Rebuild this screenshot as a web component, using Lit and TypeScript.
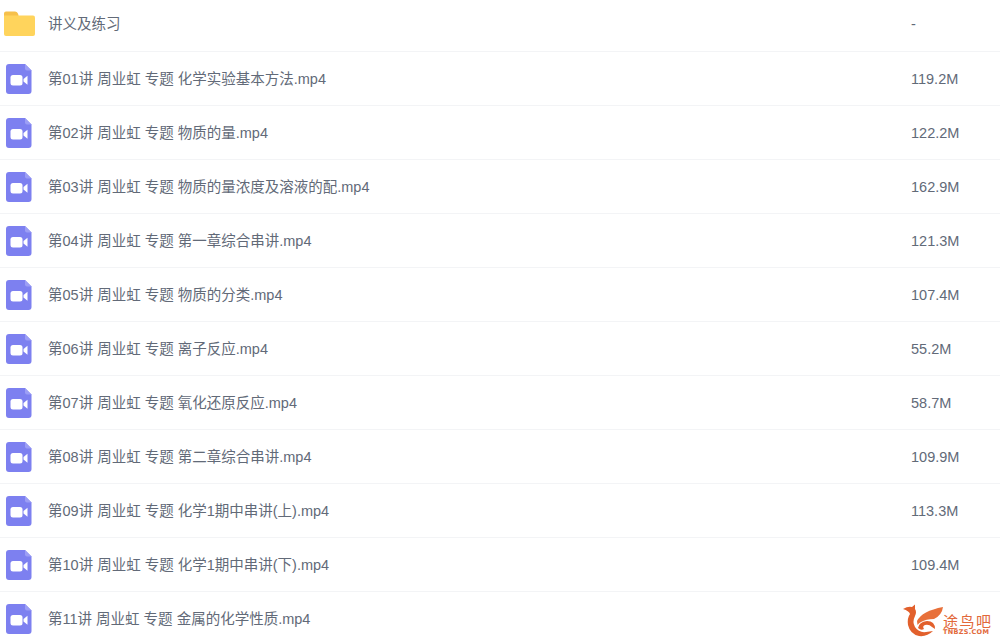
import { LitElement, html, css, svg } from "lit";
import { customElement } from "lit/decorators.js";

const rows: [string, string][] = [
  ["第01讲 周业虹 专题 化学实验基本方法.mp4", "119.2M"],
  ["第02讲 周业虹 专题 物质的量.mp4", "122.2M"],
  ["第03讲 周业虹 专题 物质的量浓度及溶液的配.mp4", "162.9M"],
  ["第04讲 周业虹 专题 第一章综合串讲.mp4", "121.3M"],
  ["第05讲 周业虹 专题 物质的分类.mp4", "107.4M"],
  ["第06讲 周业虹 专题 离子反应.mp4", "55.2M"],
  ["第07讲 周业虹 专题 氧化还原反应.mp4", "58.7M"],
  ["第08讲 周业虹 专题 第二章综合串讲.mp4", "109.9M"],
  ["第09讲 周业虹 专题 化学1期中串讲(上).mp4", "113.3M"],
  ["第10讲 周业虹 专题 化学1期中串讲(下).mp4", "109.4M"],
  ["第11讲 周业虹 专题 金属的化学性质.mp4", ""],
];

const folder = html`<svg class="ic" width="31" height="25" viewBox="0 0 31 25">
  <path d="M0 2.500Q0 0.500 2 0.500H11Q13 0.500 13.600 2L14.500 4V6H0Z" fill="#f6c04a"/>
  <path d="M0 4.500H29Q31 4.500 31 6.500V23Q31 25 29 25H2Q0 25 0 23Z" fill="#ffd45c"/>
</svg>`;

const video = html`<svg class="ic" width="26" height="30" viewBox="0 0 26 30">
  <path d="M3 0H19L25.500 6.500V27Q25.500 30 22.500 30H3Q0 30 0 27V3Q0 0 3 0Z" fill="#7d80f0"/>
  <path d="M19 0L25.500 6.500H21Q19 6.500 19 4.500Z" fill="#9c9ef5"/>
  <rect x="4.500" y="11" width="12" height="10.500" rx="2.500" fill="#fff"/>
  <path d="M17.500 15L21.500 11.800V20.700L17.500 17.500Z" fill="#fff"/>
</svg>`;

@customElement("app-root")
export class AppRoot extends LitElement {
  static styles = css`
    :host {
      display: block;
      width: 1000px;
      height: 640px;
      overflow: hidden;
      background: #fff;
      position: relative;
      font-family: "Liberation Sans", "Noto Sans CJK SC", sans-serif;
      font-size: 14.500px;
      color: #626a78;
    }
    .list { display: flex; flex-direction: column; }
    .row {
      height: 54px;
      box-sizing: border-box;
      display: grid;
      grid-template-columns: 48px 1fr 89px;
      align-items: center;
      border-bottom: 1px solid #f3f4f6;
    }
    .row.first { height: 52px; padding-bottom: 4px; }
    .cell { display: flex; padding-left: 6px; }
    .cell.f { padding-left: 4px; }
    .name, .size { white-space: nowrap; line-height: 20px; }
    .logo {
      position: absolute;
      left: 902px;
      top: 604px;
      display: flex;
      color: #e2683a;
    }
    .brand { display: flex; flex-direction: column; margin-top: 11px; }
    .cn { font-size: 15px; line-height: 14px; letter-spacing: 1.500px; font-weight: 400; }
    .en { font-family: "DejaVu Sans", sans-serif; font-size: 6.500px; line-height: 7px; font-weight: 700; letter-spacing: 0.300px; }
  `;

  render() {
    return html`
      <div class="list">
        <div class="row first">
          <div class="cell f">${folder}</div>
          <div class="name">讲义及练习</div>
          <div class="size">-</div>
        </div>
        ${rows.map(
          ([n, s]) => html`<div class="row">
            <div class="cell">${video}</div>
            <div class="name">${n}</div>
            <div class="size">${s}</div>
          </div>`
        )}
      </div>
      <div class="logo">
        <svg width="41" height="34" viewBox="0 0 41 34">
          ${svg`<path d="M1 5Q6 2 10 3L13 .5L13 5Q15 8 13 12Q10 18 13 23Q17 29 24 28L31 27Q25 33 17 32Q8 30 6 21Q5 14 8 10Q7 7 1 5Z" fill="#e2602c"/>
          <path d="M15 17Q20 7 41 3Q40 11 32 15Q24 15 19 18Q17 19 15.500 21Z" fill="#e8703a"/>
          <path d="M16 24Q17 18 25 17Q33 17 33 25L30 23Q27 20 23 21Q20 22 22 25Q19 27 16 24Z" fill="#e2602c"/>`}
        </svg>
        <div class="brand">
          <div class="cn">途鸟吧</div>
          <div class="en">TNBZS.COM</div>
        </div>
      </div>
    `;
  }
}
